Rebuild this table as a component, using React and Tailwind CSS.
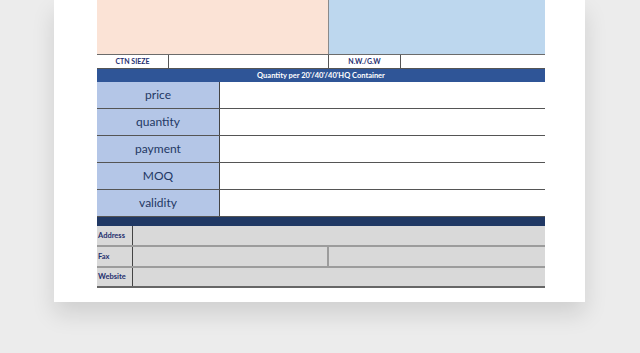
import React from 'react';

const terms = ['price', 'quantity', 'payment', 'MOQ', 'validity'];

const font = { fontFamily: 'Lato, "Open Sans", sans-serif' };

export default function App() {
  return (
    <div className="w-[640px] h-[353px] overflow-hidden bg-[#ececec] pl-[54px]" style={font}>
      <div className="w-[531px] bg-white pl-[43px] pr-[40px] pb-[14px] shadow-[0_12px_22px_rgba(0,0,0,0.12)]">
        {/* photo blocks */}
        <div className="flex h-[55px] border-b border-[#6b6b6b]">
          <div className="w-[232px] bg-[#fbe3d6] border-r border-[#8a8a8a]" />
          <div className="flex-1 bg-[#bdd7ee]" />
        </div>

        {/* carton row */}
        <div className="flex h-[14px] border-b border-[#555] text-[7px] font-bold text-[#1f3070] leading-[13px]">
          <div className="w-[72px] border-r border-[#555] text-center">CTN SIEZE</div>
          <div className="w-[160px] border-r border-[#555]" />
          <div className="w-[72px] border-r border-[#555] text-center">N.W./G.W</div>
          <div className="flex-1" />
        </div>

        <div className="h-[13px] bg-[#2f5597] text-white text-[7.5px] font-bold text-center leading-[13px]">
          Quantity per 20'/40'/40'HQ Container
        </div>

        {terms.map((t) => (
          <div key={t} className="flex h-[27px] border-b border-[#555]">
            <div className="w-[123px] bg-[#b4c6e7] border-r border-[#444] flex items-center justify-center text-[12px] text-[#1f3864]">
              {t}
            </div>
            <div className="flex-1" />
          </div>
        ))}

        <div className="h-[9px] bg-[#203864]" />

        {/* contact rows */}
        <div className="bg-[#d9d9d9] text-[7.5px] font-bold text-[#1f2f6e]">
          {['Address', 'Fax', 'Website'].map((label) => (
            <div key={label} className="flex h-[21px] border-b-2 border-[#9c9c9c] last:h-[20px] last:border-[#666]">
              <div className="w-[36px] border-r border-[#444] flex items-center pl-[1px]">{label}</div>
              {label === 'Fax' ? (
                <>
                  <div className="w-[196px] border-r-2 border-[#9c9c9c]" />
                  <div className="flex-1" />
                </>
              ) : (
                <div className="flex-1" />
              )}
            </div>
          ))}
        </div>
      </div>
    </div>
  );
}
